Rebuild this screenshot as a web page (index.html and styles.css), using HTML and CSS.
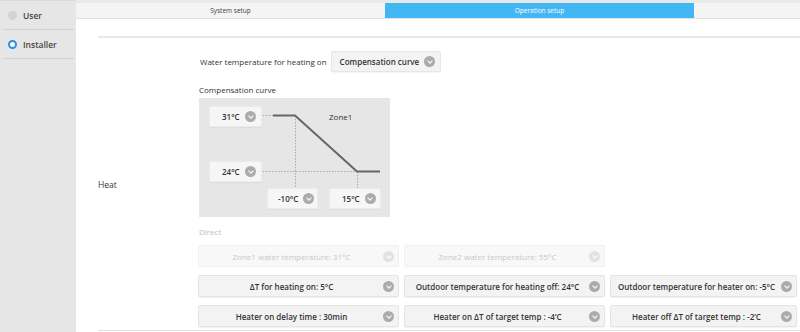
FILE: index.html
```html
<!DOCTYPE html>
<html lang="en">
<head>
    <meta charset="UTF-8">
    <meta name="viewport" content="width=device-width, initial-scale=1.0">
    <title>Operation setup</title>
    <link rel="stylesheet" href="styles.css">
</head>
<body>
    <div class="sidebar">
        <div class="side-item">
            <span class="radio"></span>
            <span>User</span>
        </div>
        <div class="side-item">
            <span class="radio checked"></span>
            <span>Installer</span>
        </div>
    </div>

    <div class="main">
        <div class="tabs">
            <div class="tab">System setup</div>
            <div class="tab active">Operation setup</div>
        </div>

        <div class="content">
            <div class="section">
                <div class="section-label">Heat</div>
                <div class="section-body">
                    <div class="field-row">
                        <span>Water temperature for heating on</span>
                        <button class="select">Compensation curve <i class="chev"></i></button>
                    </div>

                    <div class="sub-title">Compensation curve</div>
                    <div class="curve">
                        <svg class="curve-lines" width="191" height="119" viewBox="0 0 191 119">
                            <g stroke="#a8a8a8" stroke-width="1" stroke-dasharray="1.5 1.5" fill="none">
                                <line x1="64" y1="17.5" x2="74" y2="17.5"/>
                                <line x1="64" y1="73.5" x2="158" y2="73.5"/>
                                <line x1="96.5" y1="18" x2="96.5" y2="90"/>
                                <line x1="158.5" y1="74" x2="158.5" y2="90"/>
                            </g>
                            <polyline points="74,17.5 96,17.5 158,73.5 181,73.5" stroke="#666" stroke-width="2" fill="none"/>
                        </svg>
                        <span class="zone">Zone1</span>
                        <button class="select small t31">31°C <i class="chev"></i></button>
                        <button class="select small t24">24°C <i class="chev"></i></button>
                        <button class="select small tm10">-10°C <i class="chev"></i></button>
                        <button class="select small t15">15°C <i class="chev"></i></button>
                    </div>

                    <div class="sub-title muted">Direct</div>
                    <div class="options">
                        <button class="option disabled">Zone1 water temperature: 31°C <i class="chev"></i></button>
                        <button class="option disabled">Zone2 water temperature: 55°C <i class="chev"></i></button>
                        <div></div>
                        <button class="option">ΔT for heating on: 5°C <i class="chev"></i></button>
                        <button class="option">Outdoor temperature for heating off: 24°C <i class="chev"></i></button>
                        <button class="option">Outdoor temperature for heater on: -5°C <i class="chev"></i></button>
                        <button class="option">Heater on delay time : 30min <i class="chev"></i></button>
                        <button class="option">Heater on ΔT of target temp : -4’C <i class="chev"></i></button>
                        <button class="option">Heater off ΔT of target temp : -2’C <i class="chev"></i></button>
                    </div>
                </div>
            </div>
        </div>
    </div>
</body>
</html>
```

FILE: styles.css
```css
* {
    margin: 0;
    padding: 0;
    box-sizing: border-box;
}

body {
    font-family: 'Open Sans', 'Noto Sans', sans-serif;
    font-size: 8px;
    color: #333;
    background: #fff;
    display: flex;
    height: 332px;
    overflow: hidden;
}

.sidebar {
    width: 76px;
    flex-shrink: 0;
    background: #e6e6e6;
    border-top: 1px solid #dadada;
    padding: 0 2px 0 3px;
}

.side-item {
    height: 29px;
    display: flex;
    align-items: center;
    gap: 6px;
    padding-left: 5px;
    border-bottom: 1px solid #d2d2d2;
    font-size: 8.5px;
    font-weight: 600;
    color: #444;
}

.radio {
    width: 9px;
    height: 9px;
    border-radius: 50%;
    background: #d3d3d3;
}

.radio.checked {
    background: #fff;
    border: 2.5px solid #2b8fe3;
}

.main {
    flex: 1;
    display: flex;
    flex-direction: column;
    min-width: 0;
}

.tabs {
    display: flex;
    height: 19px;
    border-top: 3px solid #e9e9e9;
    background: #f4f4f4;
    border-bottom: 1px solid #e2e2e2;
}

.tab {
    width: 309px;
    display: flex;
    justify-content: center;
    align-items: center;
    font-size: 6.5px;
    color: #444;
}

.tab.active {
    background: #43b6f4;
    color: #fff;
}

.content {
    padding: 17px 0 0 22px;
}

.section {
    display: flex;
    border-top: 2px solid #e8e8e8;
    border-bottom: 1px solid #e0e0e0;
}

.section-label {
    width: 100px;
    display: flex;
    align-items: center;
    font-size: 8.5px;
    color: #333;
}

.section-body {
    flex: 1;
    padding: 13px 0 3px;
}

.field-row {
    display: flex;
    align-items: center;
    gap: 4px;
    padding-left: 2px;
}

.select {
    height: 21px;
    display: flex;
    align-items: center;
    gap: 5px;
    padding: 0 5px 0 8px;
    background: #f3f3f3;
    border: 1px solid #e6e6e6;
    border-radius: 2px;
    box-shadow: 0 1px 1px rgba(0, 0, 0, 0.04);
    font-family: inherit;
    font-size: 8px;
    font-weight: 600;
    color: #333;
}

.chev {
    width: 11px;
    height: 11px;
    border-radius: 50%;
    background: #ababab;
    position: relative;
    flex-shrink: 0;
}

.chev::after {
    content: '';
    position: absolute;
    left: 3.5px;
    top: 2.5px;
    width: 3px;
    height: 3px;
    border-right: 1.5px solid #fff;
    border-bottom: 1.5px solid #fff;
    transform: rotate(45deg);
}

.sub-title {
    margin: 12px 0 3px 1px;
    font-size: 8px;
    color: #333;
}

.sub-title.muted {
    color: #bdbdbd;
    margin: 9px 0 8px 1px;
}

.curve {
    position: relative;
    width: 191px;
    height: 119px;
    background: #e6e6e6;
    margin-left: 1px;
}

.curve-lines {
    position: absolute;
    left: 0;
    top: 0;
}

.zone {
    position: absolute;
    left: 130px;
    top: 13px;
    font-size: 8px;
    color: #333;
}

.select.small {
    position: absolute;
    width: 53px;
    justify-content: space-between;
    padding: 0 5px 0 12px;
    border-color: #ececec;
    background: #f6f6f6;
}

.t31 { left: 10px; top: 8px; }
.t24 { left: 10px; top: 63px; }
.tm10 { left: 68px; top: 90px; width: 51px !important; padding-left: 10px !important; }
.t15 { left: 130px; top: 90px; width: 52px !important; }

.options {
    display: grid;
    grid-template-columns: 201px 201px 187px;
    gap: 8px 5px;
}

.option {
    position: relative;
    height: 22px;
    display: flex;
    align-items: center;
    justify-content: center;
    padding: 0 18px 0 4px;
    background: #f3f3f3;
    border: 1px solid #e4e4e4;
    border-radius: 2px;
    box-shadow: 0 1px 1px rgba(0, 0, 0, 0.05);
    font-family: inherit;
    font-size: 8px;
    font-weight: 600;
    color: #333;
    white-space: nowrap;
}

.option .chev {
    position: absolute;
    right: 4px;
    top: 5px;
}

.option.disabled {
    background: #f8f8f8;
    border-color: #f0f0f0;
    box-shadow: none;
    color: #c8c8c8;
    font-weight: 400;
}

.option.disabled .chev {
    background: #e2e2e2;
}
```
